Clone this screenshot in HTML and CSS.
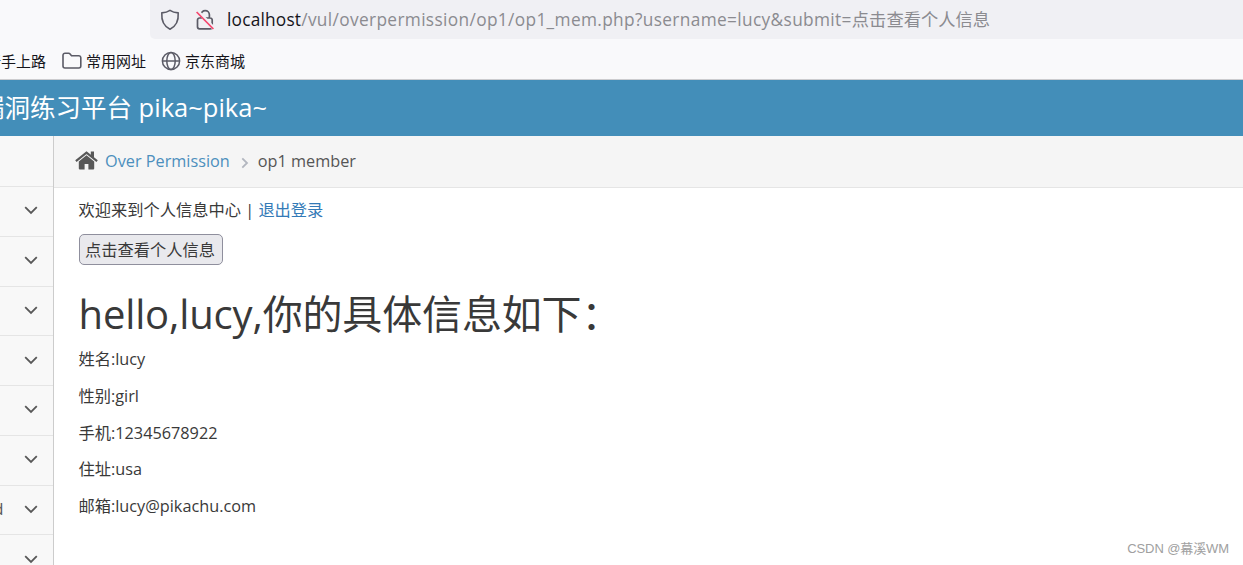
FILE: index.html
```html
<!DOCTYPE html>
<html lang="zh-CN">
<head>
    <meta charset="UTF-8">
    <meta name="viewport" content="width=device-width, initial-scale=1.0">
    <title>pikachu</title>
    <link rel="stylesheet" href="styles.css">
</head>
<body>
    <div class="toolbar">
        <div class="urlbar">
            <svg class="shield" width="20" height="22" viewBox="0 0 20 22">
                <path d="M10 1.3C7.4 3.1 4.6 3.7 1.8 3.9C1.3 11.5 3.6 17.2 10 20.2C16.4 17.2 18.7 11.5 18.2 3.9C15.4 3.7 12.6 3.1 10 1.3Z" fill="none" stroke="#5b5b66" stroke-width="1.6" stroke-linejoin="round"/>
            </svg>
            <svg class="lock" width="20" height="22" viewBox="0 0 20 22">
                <path d="M6 9V5.8a4.2 4.2 0 0 1 8.4 0V9M4.5 9H15.2a2 2 0 0 1 2 2V17.8a2 2 0 0 1-2 2H4.5a2 2 0 0 1-2-2V11a2 2 0 0 1 2-2Z" fill="none" stroke="#5b5b66" stroke-width="1.7"/>
                <path d="M2.6 2.2L18.7 19.2" stroke="#f0f0f4" stroke-width="3.6"/>
                <path d="M1.6 3L18.4 20" stroke="#f5446c" stroke-width="1.7"/>
            </svg>
            <div class="url"><span class="host">localhost</span><span class="path">/vul/overpermission/op1/op1_mem.php?username=lucy&amp;submit=</span><span class="query">点击查看个人信息</span></div>
        </div>
    </div>

    <div class="bookmarks">
        <span class="bookmark">新手上路</span>
        <span class="bookmark">
            <svg width="20" height="18" viewBox="0 0 20 18">
                <path d="M1 14V3.2a2 2 0 0 1 2-2H6.6a2 2 0 0 1 1.5.7L9.5 3.7H16.8a2 2 0 0 1 2 2V14a2 2 0 0 1-2 2H3a2 2 0 0 1-2-2Z" fill="none" stroke="#5b5b66" stroke-width="1.6"/>
            </svg>
            常用网址
        </span>
        <span class="bookmark">
            <svg width="20" height="20" viewBox="0 0 20 20">
                <g fill="none" stroke="#5b5b66" stroke-width="1.5">
                    <circle cx="10" cy="10" r="8.6"/>
                    <ellipse cx="10" cy="10" rx="4.2" ry="8.6"/>
                    <path d="M1.4 10H18.6"/>
                </g>
            </svg>
            京东商城
        </span>
    </div>

    <div class="navbar">
        <div class="brand">Pikachu 漏洞练习平台 pika~pika~</div>
    </div>

    <div class="main">
        <ul class="sidebar">
            <li></li>
            <li><svg class="arrow" viewBox="0 0 14 9"><path d="M1.2 1.2L7 7L12.8 1.2"/></svg></li>
            <li><svg class="arrow" viewBox="0 0 14 9"><path d="M1.2 1.2L7 7L12.8 1.2"/></svg></li>
            <li><svg class="arrow" viewBox="0 0 14 9"><path d="M1.2 1.2L7 7L12.8 1.2"/></svg></li>
            <li><svg class="arrow" viewBox="0 0 14 9"><path d="M1.2 1.2L7 7L12.8 1.2"/></svg></li>
            <li><svg class="arrow" viewBox="0 0 14 9"><path d="M1.2 1.2L7 7L12.8 1.2"/></svg></li>
            <li><svg class="arrow" viewBox="0 0 14 9"><path d="M1.2 1.2L7 7L12.8 1.2"/></svg></li>
            <li><span>Unsafe Fileupload</span><svg class="arrow" viewBox="0 0 14 9"><path d="M1.2 1.2L7 7L12.8 1.2"/></svg></li>
            <li><svg class="arrow" viewBox="0 0 14 9"><path d="M1.2 1.2L7 7L12.8 1.2"/></svg></li>
        </ul>

        <div class="content">
            <div class="breadcrumbs">
                <svg class="home" width="23" height="19" viewBox="0 0 23 19">
                    <path d="M11.5 4.2L19.2 10.6V17.5a1 1 0 0 1-1 1H13.4V13H9.6V18.5H4.8a1 1 0 0 1-1-1V10.6Z" fill="#585858"/>
                    <path d="M0.9 10.2L11.5 1.6L22.1 10.2" fill="none" stroke="#585858" stroke-width="2.2"/>
                    <path d="M15.8 0.6H19V7.4L15.8 4.8Z" fill="#585858"/>
                </svg>
                <a class="crumb">Over Permission</a>
                <svg class="sep" width="8" height="12" viewBox="0 0 8 12"><path d="M1.3 1.3L6 6L1.3 10.7" fill="none" stroke="#b2b6bf" stroke-width="1.8"/></svg>
                <span>op1 member</span>
            </div>
            <div class="page">
                <div class="welcome">欢迎来到个人信息中心 | <a>退出登录</a></div>
                <button class="submit">点击查看个人信息</button>
                <h1>hello,lucy,你的具体信息如下：</h1>
                <p>姓名:lucy</p>
                <p>性别:girl</p>
                <p>手机:12345678922</p>
                <p>住址:usa</p>
                <p>邮箱:lucy@pikachu.com</p>
            </div>
        </div>
    </div>
    <div class="watermark">CSDN @幕溪WM</div>
</body>
</html>
```
FILE: styles.css
```css
* {
    box-sizing: border-box;
}

body {
    margin: 0;
    height: 565px;
    overflow: hidden;
    display: flex;
    flex-direction: column;
    background-color: #fff;
    color: #393939;
    font-family: "Open Sans", "Noto Sans CJK SC", sans-serif;
    font-size: 16.25px;
}

/* browser bars */
.toolbar {
    flex: none;
    height: 39px;
    padding-left: 150px;
    background-color: #f9f9fb;
}

.urlbar {
    display: flex;
    align-items: center;
    height: 39px;
    padding-left: 10px;
    background-color: #f0f0f4;
    border-radius: 0 0 0 5px;
}

.shield {
    margin-right: 15px;
}

.lock {
    margin-right: 12px;
}

.url {
    padding-top: 1px;
    white-space: nowrap;
    font-size: 17.3px;
    line-height: 24px;
    color: #8b8b90;
}

.host {
    color: #15141a;
    letter-spacing: 0.2px;
}

.path {
    letter-spacing: 0.35px;
}

.bookmarks {
    flex: none;
    display: flex;
    align-items: center;
    gap: 15px;
    height: 41px;
    padding: 4px 0 0 1px;
    background-color: #f9f9fb;
    border-bottom: 1px solid #cccccf;
    font-family: "Noto Sans CJK SC", sans-serif;
    font-size: 15px;
    color: #15141a;
    white-space: nowrap;
}

.bookmark {
    display: flex;
    align-items: center;
    gap: 4px;
    line-height: 20px;
}

.bookmark:first-child {
    margin: 0 1px 0 -15px;
}

/* blue header */
.navbar {
    flex: none;
    height: 56px;
    background-color: #438eb9;
}

.brand {
    display: flex;
    justify-content: flex-end;
    width: 267px;
    line-height: 54px;
    font-size: 25.5px;
    color: #fff;
    white-space: nowrap;
}

.main {
    flex: 1;
    min-height: 0;
    display: flex;
}

.sidebar {
    flex: none;
    width: 54px;
    margin: 0;
    padding: 0;
    list-style: none;
    background-color: #f8f8f8;
    border-right: 1px solid #ccc;
}

.sidebar li {
    display: flex;
    align-items: center;
    justify-content: flex-end;
    height: 49.75px;
    padding: 0 15px 1px 0;
    border-bottom: 1px solid #e5e5e5;
    white-space: nowrap;
    color: #585858;
}

.sidebar li:first-child {
    height: 51px;
}

.sidebar span {
    margin-right: 20.5px;
}

.arrow {
    flex: none;
    width: 14px;
    height: 9px;
    fill: none;
    stroke: #585858;
    stroke-width: 1.8;
}

.content {
    flex: 1;
}

.breadcrumbs {
    display: flex;
    align-items: center;
    height: 52px;
    padding: 0 0 2px 21px;
    background-color: #f5f5f5;
    border-bottom: 1px solid #e5e5e5;
    color: #555;
}

.home {
    margin-right: 7px;
}

.crumb {
    color: #4c8fbd;
}

.sep {
    margin: 4px 9px 0 11px;
}

.page {
    padding: 10px 24.5px;
}

.welcome {
    line-height: 25px;
}

.welcome a {
    color: #337ab7;
}

.submit {
    display: block;
    width: 144px;
    height: 31px;
    margin-top: 11px;
    padding: 0 1px 0 0;
    font: inherit;
    line-height: 28px;
    color: #393939;
    background-color: #e9e9ed;
    border: 1px solid #8f8f9d;
    border-radius: 5px;
}

h1 {
    margin: 25px 0 9px;
    font-size: 40px;
    font-weight: 400;
    line-height: 48px;
    letter-spacing: -0.15px;
}

p {
    margin: 0 0 12.4px;
    line-height: 24.4px;
}

.watermark {
    position: absolute;
    right: 14px;
    bottom: 6px;
    font-family: "Liberation Sans", "Noto Sans CJK SC", sans-serif;
    font-size: 13px;
    line-height: 20px;
    letter-spacing: -0.1px;
    color: #a0a0a0;
}
```
